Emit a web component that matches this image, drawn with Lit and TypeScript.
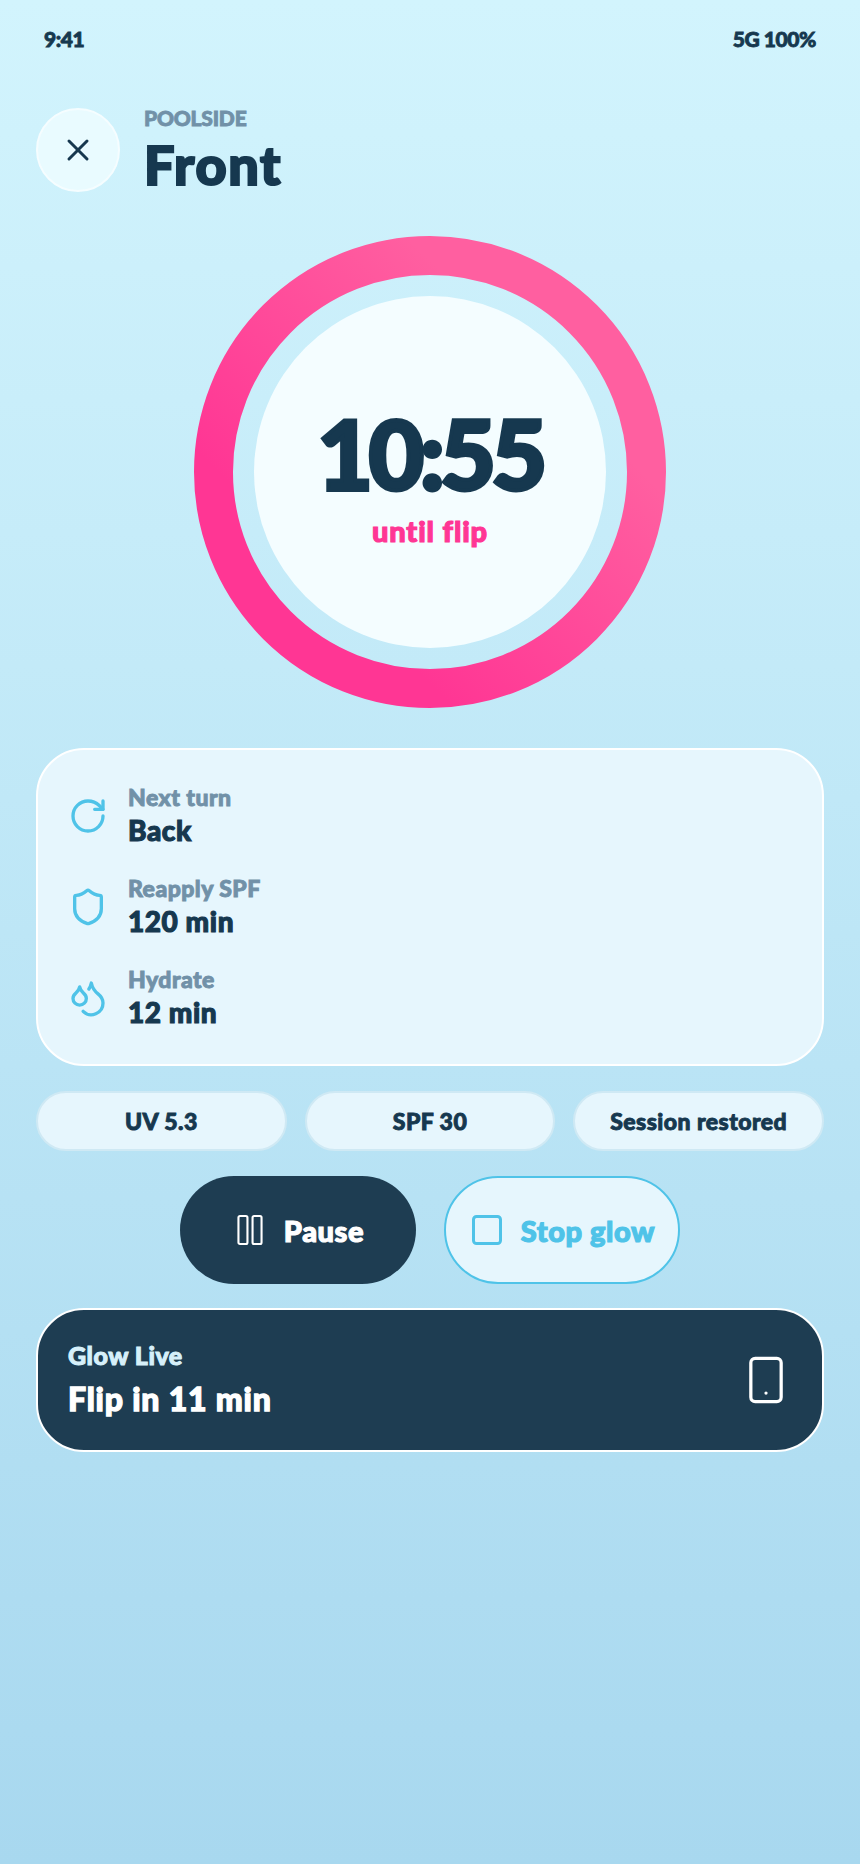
import { LitElement, html, css, svg } from "lit";
import { customElement } from "lit/decorators.js";

const icon = (body: unknown, size: number, weight = 2) => html`
  <svg width=${size} height=${size} viewBox="0 0 24 24" fill="none" stroke="currentColor"
    stroke-width=${weight} stroke-linecap="round" stroke-linejoin="round">${body}</svg>
`;

const ICONS = {
  close: svg`<path d="M18 6 6 18"/><path d="m6 6 12 12"/>`,
  rotate: svg`<path d="M21 12a9 9 0 1 1-9-9c2.52 0 4.93 1 6.74 2.74L21 8"/><path d="M21 3v5h-5"/>`,
  shield: svg`<path d="M20 13c0 5-3.5 7.5-7.66 8.95a1 1 0 0 1-.67-.01C7.5 20.5 4 18 4 13V6a1 1 0 0 1 1-1c2 0 4.5-1.2 6.24-2.72a1.17 1.17 0 0 1 1.52 0C14.51 3.81 17 5 19 5a1 1 0 0 1 1 1z"/>`,
  droplets: svg`<path d="M7 16.3c2.2 0 4-1.83 4-4.05 0-1.16-.57-2.26-1.71-3.19S7.29 6.75 7 5.3c-.29 1.45-1.14 2.84-2.29 3.76S3 11.1 3 12.25c0 2.22 1.8 4.05 4 4.05z"/><path d="M12.56 6.6A10.97 10.97 0 0 0 14 3.02c.5 2.5 2 4.9 4 6.5s3 3.5 3 5.5a6.98 6.98 0 0 1-11.91 4.97"/>`,
  pause: svg`<rect x="4.3" y="2.7" width="6" height="18.6" rx="1"/><rect x="13.7" y="2.7" width="6" height="18.6" rx="1"/>`,
  stop: svg`<rect x="3" y="3" width="18" height="18" rx="2"/>`,
  phone: svg`<rect x="5" y="2" width="14" height="20" rx="2"/><path d="M12 18h.01"/>`,
};

const STATS = [
  { icon: ICONS.rotate, label: "Next turn", value: "Back" },
  { icon: ICONS.shield, label: "Reapply SPF", value: "120 min" },
  { icon: ICONS.droplets, label: "Hydrate", value: "12 min" },
];

const CHIPS = ["UV 5.3", "SPF 30", "Session restored"];

@customElement("app-root")
export class AppRoot extends LitElement {
  static styles = css`
    :host {
      display: block;
      width: 860px;
      height: 1864px;
      overflow: hidden;
      background: linear-gradient(180deg, #d2f4fd 0%, #a8d8ef 100%);
      color: #16384f;
      font-family: "Lato", "Open Sans", sans-serif;
      font-weight: 900;
    }
    /* no rounded display font here, so thicken Lato with a stroke */
    .page * {
      -webkit-text-stroke: 0.04em currentColor;
    }
    .page {
      display: flex;
      flex-direction: column;
      padding: 0 36px;
    }
    .status {
      display: flex;
      justify-content: space-between;
      padding: 24px 8px 0;
      height: 58px;
      box-sizing: border-box;
      font-size: 21px;
      line-height: 30px;
      letter-spacing: -0.02em;
    }
    .header {
      display: flex;
      align-items: center;
      gap: 24px;
      margin-top: 50px;
      height: 84px;
    }
    .close {
      width: 84px;
      height: 84px;
      box-sizing: border-box;
      border-radius: 50%;
      border: 2px solid #f5fdff;
      background: #e9fbff;
      display: flex;
      align-items: center;
      justify-content: center;
      color: #16384f;
    }
    .title-wrap {
      display: flex;
      flex-direction: column;
      margin-top: -2px;
    }
    .eyebrow {
      font-size: 21px;
      line-height: 26px;
      letter-spacing: -0.01em;
      color: #7191a8;
    }
    .title {
      margin-top: 5px;
      font-size: 54px;
      line-height: 58px;
      letter-spacing: 0.03em;
    }
    .timer {
      display: grid;
      place-items: center;
      align-self: center;
      width: 472px;
      height: 472px;
      margin-top: 44px;
    }
    .timer > * {
      grid-area: 1 / 1;
    }
    .disk {
      width: 352px;
      height: 352px;
      box-sizing: border-box;
      padding-top: 6px;
      border-radius: 50%;
      background: #f4fdff;
      display: flex;
      flex-direction: column;
      align-items: center;
      justify-content: center;
    }
    .time {
      font-size: 96px;
      line-height: 104px;
      letter-spacing: -4.5px;
    }
    .until {
      margin-top: 8px;
      font-size: 29px;
      line-height: 36px;
      letter-spacing: 0.03em;
      color: #ff3694;
    }
    .card {
      margin-top: 40px;
      height: 318px;
      box-sizing: border-box;
      padding: 26px 30px;
      border: 2px solid #ffffff;
      border-radius: 48px;
      background: #e6f6fd;
      display: flex;
      flex-direction: column;
      gap: 12px;
    }
    .stat {
      display: flex;
      align-items: center;
      gap: 20px;
      height: 80px;
    }
    .stat-icon {
      color: #4fc3e8;
      display: flex;
    }
    .stat-label {
      font-size: 23px;
      line-height: 29px;
      letter-spacing: 0.02em;
      color: #7191a8;
    }
    .stat-value {
      font-size: 28px;
      line-height: 37px;
      letter-spacing: 0.02em;
    }
    .chips {
      display: grid;
      grid-template-columns: repeat(3, 1fr);
      gap: 18px;
      margin-top: 25px;
    }
    .chip {
      height: 60px;
      box-sizing: border-box;
      border: 2px solid #cfe9f4;
      border-radius: 30px;
      background: #e6f6fd;
      display: flex;
      align-items: center;
      justify-content: center;
      font-size: 23px;
      letter-spacing: 0.02em;
    }
    .actions {
      display: flex;
      justify-content: center;
      gap: 28px;
      margin-top: 25px;
    }
    .btn {
      width: 236px;
      height: 108px;
      box-sizing: border-box;
      border-radius: 54px;
      display: flex;
      align-items: center;
      justify-content: center;
      gap: 16px;
      font-size: 29px;
      letter-spacing: 0.02em;
    }
    .btn.primary {
      background: #1e3d52;
      color: #ffffff;
    }
    .btn.secondary {
      background: #e6f6fd;
      color: #4fc3e8;
      border: 2px solid #4fc3e8;
    }
    .btn svg {
      flex: none;
    }
    .live {
      margin-top: 24px;
      height: 144px;
      box-sizing: border-box;
      padding: 0 30px;
      border: 2px solid #ffffff;
      border-radius: 48px;
      background: #1e3d52;
      display: flex;
      align-items: center;
      justify-content: space-between;
    }
    .live-label {
      font-size: 25px;
      line-height: 33px;
      letter-spacing: 0.02em;
      color: #d6f0fa;
    }
    .live-value {
      margin-top: 4px;
      font-size: 32px;
      line-height: 46px;
      letter-spacing: 0.025em;
      color: #ffffff;
    }
    .live-icon {
      color: #ffffff;
      display: flex;
    }
  `;

  render() {
    return html`
      <div class="page">
        <div class="status"><span>9:41</span><span>5G 100%</span></div>
        <div class="header">
          <div class="close">${icon(ICONS.close, 36)}</div>
          <div class="title-wrap">
            <span class="eyebrow">POOLSIDE</span>
            <span class="title">Front</span>
          </div>
        </div>
        <div class="timer">
          <svg width="472" height="472" viewBox="0 0 472 472">
            <defs>
              <linearGradient id="ring" x1="0.15" y1="0.85" x2="0.85" y2="0.15">
                <stop offset="0.15" stop-color="#ff3694"/>
                <stop offset="0.85" stop-color="#ff5fa0"/>
              </linearGradient>
            </defs>
            <circle cx="236" cy="236" r="216.5" fill="none" stroke="url(#ring)" stroke-width="39"/>
          </svg>
          <div class="disk">
            <div class="time">10:55</div>
            <div class="until">until flip</div>
          </div>
        </div>
        <div class="card">
          ${STATS.map(s => html`
            <div class="stat">
              <span class="stat-icon">${icon(s.icon, 40)}</span>
              <div>
                <div class="stat-label">${s.label}</div>
                <div class="stat-value">${s.value}</div>
              </div>
            </div>
          `)}
        </div>
        <div class="chips">
          ${CHIPS.map(c => html`<div class="chip">${c}</div>`)}
        </div>
        <div class="actions">
          <div class="btn primary">${icon(ICONS.pause, 36, 1.4)}<span>Pause</span></div>
          <div class="btn secondary">${icon(ICONS.stop, 36)}<span>Stop glow</span></div>
        </div>
        <div class="live">
          <div>
            <div class="live-label">Glow Live</div>
            <div class="live-value">Flip in 11 min</div>
          </div>
          <span class="live-icon">${icon(ICONS.phone, 52, 1.5)}</span>
        </div>
      </div>
    `;
  }
}
